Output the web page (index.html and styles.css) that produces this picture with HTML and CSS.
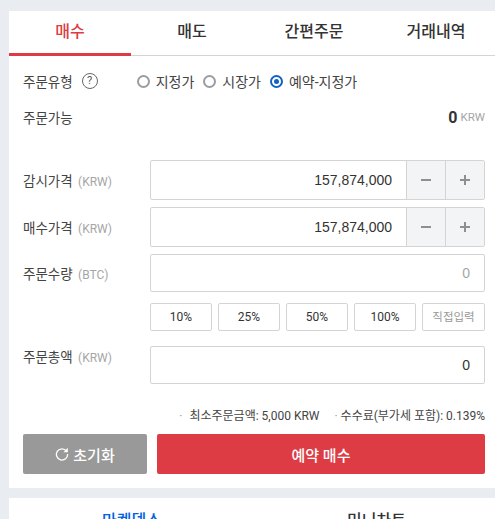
FILE: index.html
```html
<!DOCTYPE html>
<html lang="ko">
<head>
  <meta charset="UTF-8">
  <meta name="viewport" content="width=device-width, initial-scale=1.0">
  <title>주문</title>
  <link rel="stylesheet" href="styles.css">
</head>
<body>

<div class="panel order-panel">
  <div class="tabs">
    <div class="tab active">매수</div>
    <div class="tab">매도</div>
    <div class="tab">간편주문</div>
    <div class="tab">거래내역</div>
  </div>

  <div class="order-body">
    <div class="type-row">
      <div class="type-label">주문유형</div>
      <div class="help">?</div>
      <div class="radios">
        <div class="radio-item"><span class="radio"></span>지정가</div>
        <div class="radio-item"><span class="radio"></span>시장가</div>
        <div class="radio-item"><span class="radio checked"></span>예약-지정가</div>
      </div>
    </div>

    <div class="avail-row">
      <div class="type-label">주문가능</div>
      <div class="avail-value"><b>0</b><span>KRW</span></div>
    </div>

    <div class="field-row">
      <div class="field-label">감시가격 <span>(KRW)</span></div>
      <div class="field">
        <div class="field-value">157,874,000</div>
        <div class="stepper">
          <svg viewBox="0 0 10 10" width="10" height="10"><path d="M0 5h10" stroke="#8f8f8f" stroke-width="2"/></svg>
        </div>
        <div class="stepper">
          <svg viewBox="0 0 10 10" width="10" height="10"><path d="M0 5h10M5 0v10" stroke="#8f8f8f" stroke-width="2"/></svg>
        </div>
      </div>
    </div>

    <div class="field-row">
      <div class="field-label">매수가격 <span>(KRW)</span></div>
      <div class="field">
        <div class="field-value">157,874,000</div>
        <div class="stepper">
          <svg viewBox="0 0 10 10" width="10" height="10"><path d="M0 5h10" stroke="#8f8f8f" stroke-width="2"/></svg>
        </div>
        <div class="stepper">
          <svg viewBox="0 0 10 10" width="10" height="10"><path d="M0 5h10M5 0v10" stroke="#8f8f8f" stroke-width="2"/></svg>
        </div>
      </div>
    </div>

    <div class="field-row qty-row">
      <div class="field-label">주문수량 <span>(BTC)</span></div>
      <div class="field">
        <div class="field-value muted">0</div>
      </div>
    </div>

    <div class="pct-row">
      <div class="pct">10%</div>
      <div class="pct">25%</div>
      <div class="pct">50%</div>
      <div class="pct">100%</div>
      <div class="pct direct">직접입력</div>
    </div>

    <div class="field-row total-row">
      <div class="field-label">주문총액 <span>(KRW)</span></div>
      <div class="field">
        <div class="field-value">0</div>
      </div>
    </div>

    <div class="notes">
      <span><i>·</i>최소주문금액: 5,000 KRW</span>
      <span><i>·</i>수수료(부가세 포함): 0.139%</span>
    </div>

    <div class="actions">
      <div class="btn reset">
        <svg class="reset-icon" viewBox="0 0 14 14" width="14" height="14">
          <path d="M11.6 4.2A5.6 5.6 0 1 0 12.6 7" fill="none" stroke="#fff" stroke-width="1.3"/>
          <path d="M12.8 .8V5.2H8.4z" fill="#fff"/>
        </svg>
        초기화
      </div>
      <div class="btn submit">예약 매수</div>
    </div>
  </div>
</div>

<div class="panel bottom-panel">
  <div class="bottom-tab active">마켓뎁스</div>
  <div class="bottom-tab">미니차트</div>
</div>

</body>
</html>
```

FILE: styles.css
```css
html, body {
  height: 519px;
  overflow: hidden;
}

body {
  margin: 0;
  padding: 11px 0 0 9px;
  box-sizing: border-box;
  background: #e9ecf1;
  font-family: "Roboto", "Noto Sans CJK KR", sans-serif;
  font-size: 13px;
  color: #333;
}

.panel {
  background: #fff;
}

.order-panel {
  height: 477px;
}

/* tabs */
.tabs {
  display: flex;
  height: 44px;
  border-bottom: 1px solid #d4d4d4;
}

.tab {
  flex: 0 0 122px;
  height: 44px;
  line-height: 41px;
  text-align: center;
  font-size: 16px;
  font-weight: 500;
  color: #333;
}

.tab.active {
  height: 42px;
  color: #dd3c44;
  border-bottom: 3px solid #dd3c44;
}

.order-body {
  padding: 0 10px 0 14px;
}

/* order type */
.type-row {
  display: flex;
  align-items: center;
  height: 50px;
}

.type-label {
  font-size: 13.5px;
  color: #444;
}

.help {
  width: 14px;
  height: 14px;
  margin-left: 9px;
  border: 1px solid #666;
  border-radius: 50%;
  font-size: 11px;
  line-height: 14px;
  text-align: center;
  color: #555;
}

.radios {
  display: flex;
  gap: 9px;
  margin-left: 39px;
}

.radio-item {
  display: flex;
  align-items: center;
  gap: 6px;
  font-size: 14px;
  color: #444;
}

.radio {
  width: 9px;
  height: 9px;
  border: 2px solid #9b9ba3;
  border-radius: 50%;
}

.radio.checked {
  width: 5px;
  height: 5px;
  border-color: #1261c4;
  padding: 2px;
  background: #1261c4;
  background-clip: content-box;
}

/* available */
.avail-row {
  display: flex;
  justify-content: space-between;
  align-items: center;
  height: 22px;
}

.avail-value {
  display: flex;
  align-items: center;
  gap: 3px;
}

.avail-value b {
  font-size: 16px;
  font-weight: 700;
  color: #333;
}

.avail-value span {
  font-size: 11.5px;
  color: #a6a6a6;
}

/* fields */
.field-row {
  display: flex;
  align-items: center;
  justify-content: space-between;
  margin-top: 7px;
}

.avail-row + .field-row {
  margin-top: 32px;
}

.field-label {
  font-size: 13.5px;
  color: #444;
}

.field-label span {
  margin-left: 2px;
  font-size: 12px;
  color: #a6a6a6;
}

.field {
  display: flex;
  width: 333px;
  height: 38px;
  border: 1px solid #d4d4d4;
  border-radius: 2px;
}

.field-value {
  flex: 1;
  padding-right: 14px;
  font-family: "Liberation Sans", sans-serif;
  font-size: 14px;
  line-height: 38px;
  text-align: right;
  color: #333;
}

.field-value.muted {
  color: #a6a6a6;
}

.stepper {
  display: flex;
  align-items: center;
  justify-content: center;
  width: 38px;
  border-left: 1px solid #d4d4d4;
  background: #f3f4f6;
}

.qty-row .field {
  height: 36px;
}

.qty-row .field-value {
  line-height: 36px;
}

.pct-row {
  display: flex;
  justify-content: flex-end;
  gap: 6px;
  margin-top: 11px;
}

.pct {
  width: 60px;
  height: 26px;
  border: 1px solid #d4d4d4;
  border-radius: 2px;
  font-size: 12px;
  line-height: 26px;
  text-align: center;
  color: #333;
}

.pct.direct {
  width: 61px;
  font-size: 11.5px;
  color: #999;
}

.total-row {
  align-items: flex-start;
  margin-top: 15px;
}

.total-row .field {
  height: 36px;
}

.total-row .field-value {
  line-height: 36px;
}

/* notes */
.notes {
  display: flex;
  justify-content: flex-end;
  gap: 15px;
  margin-top: 24px;
  font-size: 12px;
  line-height: 16px;
  color: #444;
}

.notes i {
  margin-right: 7px;
  font-style: normal;
  color: #999;
}

.notes span + span i {
  margin-right: 3px;
}

/* buttons */
.actions {
  display: flex;
  gap: 10px;
  margin-top: 10px;
}

.btn {
  display: flex;
  align-items: center;
  justify-content: center;
  height: 40px;
  border-radius: 2px;
  font-size: 15px;
  font-weight: 500;
  color: #fff;
}

.reset {
  gap: 4px;
  width: 124px;
  background: #999;
}

.reset-icon {
  display: block;
}

.submit {
  flex: 1;
  background: #dd3c44;
}

/* bottom tabs */
.bottom-panel {
  display: flex;
  margin-top: 10px;
  height: 21px;
}

.bottom-tab {
  flex: 0 0 245px;
  padding-top: 9px;
  text-align: center;
  font-size: 16px;
  font-weight: 500;
  color: #333;
}

.bottom-tab.active {
  color: #0062df;
}
```
